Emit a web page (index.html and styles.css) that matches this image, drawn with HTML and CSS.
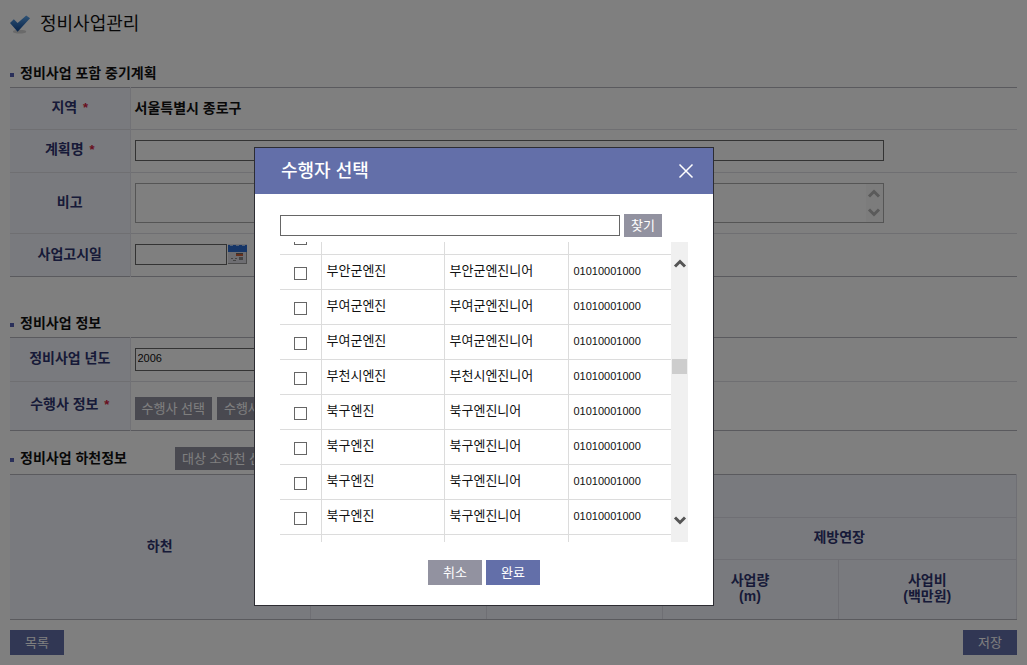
FILE: index.html
```html
<!DOCTYPE html>
<html lang="ko">
<head>
<meta charset="utf-8">
<meta name="viewport" content="width=device-width, initial-scale=1">
<title>정비사업관리</title>
<link rel="stylesheet" href="styles.css">
</head>
<body>
<main class="page">
  <header class="page-head">
    <svg class="page-check" viewBox="0 0 22 20" aria-hidden="true">
      <defs><linearGradient id="g" x1="0" y1="0" x2="0" y2="1"><stop offset="0" stop-color="#5fa8ee"/><stop offset="1" stop-color="#0c4694"/></linearGradient></defs>
      <ellipse cx="10" cy="18" rx="7" ry="2" fill="#d4d4d4"/>
      <path d="M0 9 L4 5 L8 9 L17 1 L21 4 L8 18 Z" fill="url(#g)"/>
    </svg>
    <h1 class="page-title">정비사업관리</h1>
  </header>

  <section class="block block-plan">
    <div class="block-head"><h2 class="block-title">정비사업 포함 중기계획</h2></div>
    <table class="form-table">
      <tr class="row-region"><th scope="row">지역 <span class="req">*</span></th><td><strong>서울특별시 종로구</strong></td></tr>
      <tr class="row-name"><th scope="row"><label for="plan">계획명 <span class="req">*</span></label></th><td><input class="field field-long" id="plan" type="text"></td></tr>
      <tr class="row-note"><th scope="row"><label for="note">비고</label></th><td>
        <div class="note">
          <textarea class="note-text" id="note"></textarea>
          <div class="note-scroll" aria-hidden="true">
            <svg class="arrow" viewBox="0 0 14 9"><path d="M2 7.500 L7 2.500 L12 7.500"/></svg>
            <svg class="arrow" viewBox="0 0 14 9"><path d="M2 1.500 L7 6.500 L12 1.500"/></svg>
          </div>
        </div></td></tr>
      <tr class="row-name"><th scope="row"><label for="date">사업고시일</label></th><td>
        <div class="date">
          <input class="field field-date" id="date" type="text">
          <button class="cal" type="button" aria-label="달력">
            <svg viewBox="0 0 19 20" width="19" height="20">
              <rect x="0" y="0" width="19" height="20" fill="#dcdce4"/>
              <rect x="0" y="1" width="19" height="7" fill="#2d6cd0"/>
              <path d="M2 1h3v1h-3z M8 1h3v1h-3z M14 1h3v1h-3z" fill="#a9c4ee"/>
              <path d="M8 9h7v1h-7z" fill="#666"/>
              <path d="M8 10h7v2h-7z" fill="#c9603c"/>
              <path d="M3 14h2v1h-2z M7 14h2v1h-2z M11 13h4v3h-4z M5 16h3v1h-3z" fill="#888"/>
              <path d="M0 19h19v1h-19z M18 8h1v12h-1z" fill="#999"/>
            </svg>
          </button>
        </div></td></tr>
    </table>
  </section>

  <section class="block block-info">
    <div class="block-head"><h2 class="block-title">정비사업 정보</h2></div>
    <table class="form-table">
      <tr class="row-year"><th scope="row"><label for="year">정비사업 년도</label></th><td><select class="field field-year" id="year"><option>2006</option></select></td></tr>
      <tr class="row-vendor"><th scope="row">수행사 정보 <span class="req">*</span></th><td><div class="btn-row"><button class="btn" type="button">수행사 선택</button><button class="btn" type="button">수행사 삭제</button></div></td></tr>
    </table>
  </section>

  <section class="block">
    <div class="block-head block-head-action"><h2 class="block-title">정비사업 하천정보</h2><button class="btn" type="button">대상 소하천 선택</button></div>
    <table class="river-table">
      <colgroup><col class="col-river"><col class="col-n"><col class="col-n"><col class="col-n"><col></colgroup>
      <tr class="river-top"><th rowspan="3">하천</th><th colspan="4"></th></tr>
      <tr class="river-mid"><th colspan="2"></th><th colspan="2">제방연장</th></tr>
      <tr class="river-low"><th></th><th></th><th>사업량<br>(m)</th><th>사업비<br>(백만원)</th></tr>
    </table>
  </section>

  <footer class="page-foot">
    <button class="btn btn-main" type="button">목록</button>
    <button class="btn btn-main" type="button">저장</button>
  </footer>
</main>

<div class="dim"></div>

<section class="modal" role="dialog" aria-labelledby="modal-title">
  <header class="modal-head">
    <h2 class="modal-title" id="modal-title">수행자 선택</h2>
    <button class="modal-close" type="button" aria-label="닫기"><svg viewBox="0 0 16 16" width="16" height="16"><path d="M1.500 1.500 L14.500 14.500 M14.500 1.500 L1.500 14.500"/></svg></button>
  </header>
  <div class="modal-body">
    <div class="search">
      <input class="field search-field" type="text" aria-label="검색어">
      <button class="btn btn-find" type="button">찾기</button>
    </div>
    <div class="list">
      <div class="list-view">
        <table class="list-table">
          <colgroup><col class="col-check"><col class="col-org"><col class="col-name"><col></colgroup>
          <tr><td><input class="check" type="checkbox" aria-label="선택"></td><td></td><td></td><td></td></tr>
          <tr><td><input class="check" type="checkbox" aria-label="선택"></td><td>부안군엔진</td><td>부안군엔진니어</td><td class="tel">01010001000</td></tr>
          <tr><td><input class="check" type="checkbox" aria-label="선택"></td><td>부여군엔진</td><td>부여군엔진니어</td><td class="tel">01010001000</td></tr>
          <tr><td><input class="check" type="checkbox" aria-label="선택"></td><td>부여군엔진</td><td>부여군엔진니어</td><td class="tel">01010001000</td></tr>
          <tr><td><input class="check" type="checkbox" aria-label="선택"></td><td>부천시엔진</td><td>부천시엔진니어</td><td class="tel">01010001000</td></tr>
          <tr><td><input class="check" type="checkbox" aria-label="선택"></td><td>북구엔진</td><td>북구엔진니어</td><td class="tel">01010001000</td></tr>
          <tr><td><input class="check" type="checkbox" aria-label="선택"></td><td>북구엔진</td><td>북구엔진니어</td><td class="tel">01010001000</td></tr>
          <tr><td><input class="check" type="checkbox" aria-label="선택"></td><td>북구엔진</td><td>북구엔진니어</td><td class="tel">01010001000</td></tr>
          <tr><td><input class="check" type="checkbox" aria-label="선택"></td><td>북구엔진</td><td>북구엔진니어</td><td class="tel">01010001000</td></tr>
          <tr><td></td><td></td><td></td><td></td></tr>
        </table>
      </div>
      <div class="scrollbar" aria-hidden="true">
        <svg class="arrow" viewBox="0 0 14 9"><path d="M2 7.500 L7 2.500 L12 7.500"/></svg>
        <div class="thumb"></div>
        <svg class="arrow" viewBox="0 0 14 9"><path d="M2 1.500 L7 6.500 L12 1.500"/></svg>
      </div>
    </div>
    <div class="modal-foot">
      <button class="btn btn-wide" type="button">취소</button>
      <button class="btn btn-main" type="button">완료</button>
    </div>
  </div>
</section>
</body>
</html>
```

FILE: styles.css
```css
* { box-sizing: border-box; }

body {
  margin: 0;
  background: #fff;
  color: #111;
  font-family: "Liberation Sans", "Noto Sans CJK KR", sans-serif;
  font-size: 13px;
  line-height: 16px;
}

h1, h2 { margin: 0; }
input, select, textarea, button { margin: 0; font: inherit; color: inherit; border-radius: 0; }
table { width: 100%; border-collapse: collapse; table-layout: fixed; }

.page { padding: 12px 10px 10px; }
.page-head { display: flex; align-items: center; gap: 9px; height: 24px; }
.page-check { width: 21px; height: 20px; }
.page-title { font-size: 18px; font-weight: 400; line-height: 24px; }

.block-head { display: flex; align-items: center; height: 28px; }
.block-title { display: flex; align-items: center; gap: 6px; font-size: 14px; font-weight: 700; line-height: 20px; }
.block-title::before { content: ""; width: 4px; height: 4px; margin-top: 4px; background: #5560b4; }
.block-plan { padding-top: 23px; }
.block-info { padding-top: 32px; }
.block-head-action { height: 43px; padding-top: 11px; gap: 48px; }

.form-table { border-top: 1px solid #b4b4bc; border-bottom: 1px solid #b4b4bc; }
.form-table th {
  width: 120px;
  padding: 0 0 3px;
  background: #f3f4fc;
  border-right: 1px solid #e4e4ec;
  color: #2f3570;
  font-size: 14px;
  font-weight: 700;
}
.form-table td { padding: 0 5px 2px 4px; font-size: 14px; }
.form-table tr + tr > * { border-top: 1px solid #dfdfe5; }
.req { margin-left: 2px; color: #d22040; font-size: 13px; }
.row-region { height: 42px; }
.row-name { height: 43px; }
.row-note { height: 61px; }
.row-note td { padding-bottom: 0; }
.row-year { height: 44px; }
.row-year td { padding-bottom: 0; }
.row-vendor { height: 49px; }
.row-vendor .btn-row { padding-top: 6px; }

.field { display: block; height: 21px; padding: 0 3px; border: 1px solid #666; background: #fff; font-size: 13px; }
.field-long { width: 86%; max-width: 749px; }
.field-date { width: 92px; }
.field-year { width: 240px; height: 23px; appearance: none; padding: 0 2px 4px; font-size: 11px; }
.date { display: flex; gap: 1px; }
.cal { display: flex; padding: 0; border: 0; background: none; }

.note { display: flex; width: 86%; max-width: 749px; height: 40px; border: 1px solid #ababab; }
.note-text { flex: 1; padding: 2px; border: 0; background: #fff; resize: none; }
.note-scroll { display: flex; flex-direction: column; justify-content: space-between; align-items: center; width: 17px; padding: 5px 0 5px; background: #f8f8f8; }
.arrow { display: block; width: 14px; height: 9px; fill: none; stroke: #555; stroke-width: 3; }
.note-scroll .arrow { stroke: #b4b4b4; }

.btn { height: 23px; padding: 0 7px; border: 0; background: #9292a0; color: #fff; font-size: 13px; line-height: 21px; white-space: nowrap; }
.btn-row { display: flex; gap: 5px; }
.btn-main, .btn-wide { width: 54px; height: 25px; }
.btn-main { background: #636fa9; }

.river-table { border-top: 1px solid #b4b4bc; border-bottom: 1px solid #b4b4bc; }
.river-table th { padding: 0 0 3px; background: #f3f4fc; border: 1px solid #dedee8; color: #2f3570; font-size: 14px; font-weight: 700; }
.river-table tr:first-child th { border-top-color: #b4b4bc; }
.river-table tr:last-child th, .river-table th[rowspan] { border-bottom-color: #b4b4bc; }
.river-table th[rowspan] { border-left: 0; }
.river-top { height: 43px; }
.river-mid { height: 42px; }
.river-low { height: 60px; }
.col-river { width: 300px; }
.col-n { width: 176px; }

.page-foot { display: flex; justify-content: space-between; padding-top: 10px; }

.dim { position: fixed; inset: 0; background: rgba(0, 0, 0, .5); }

.modal { position: fixed; top: 147px; left: 254px; width: 460px; border: 1px solid #2d2d33; background: #fff; }
.modal-head { display: flex; align-items: center; justify-content: space-between; height: 46px; padding: 0 19px 0 26px; background: #636fa9; color: #fff; }
.modal-title { font-size: 18px; font-weight: 500; line-height: 24px; }
.modal-close { display: flex; padding: 0; border: 0; background: none; }
.modal-close path { fill: none; stroke: #fff; stroke-width: 1.500; }
.modal-body { padding: 20px 25px; }
.search { display: flex; align-items: center; gap: 4px; }
.search-field { width: 340px; }
.btn-find { width: 38px; }

.list { display: flex; height: 300px; margin-top: 5px; }
.list-view { flex: 1; overflow: hidden; }
.list-table { margin-top: -23px; }
.list-table tr { height: 35px; }
.list-table td { padding: 0 5px 2px; border: 1px solid #dcdcdc; }
.list-table td:first-child { padding: 2px 0 0; border-left: 0; text-align: center; }
.list-table td:last-child { border-right: 0; }
.col-check { width: 41px; }
.col-org { width: 123px; }
.col-name { width: 124px; }
.list-table .tel { font-size: 11px; }
.check { appearance: none; display: block; width: 13px; height: 13px; margin: 0 auto; border: 1px solid #666; background: #fff; }
.scrollbar { display: flex; flex-direction: column; align-items: center; justify-content: space-between; width: 17px; padding: 17px 0; background: #f0f0f0; }
.thumb { width: 15px; height: 15px; margin-bottom: 51px; background: #cdcdcd; }

.modal-foot { display: flex; justify-content: center; gap: 4px; padding-top: 18px; }
```
